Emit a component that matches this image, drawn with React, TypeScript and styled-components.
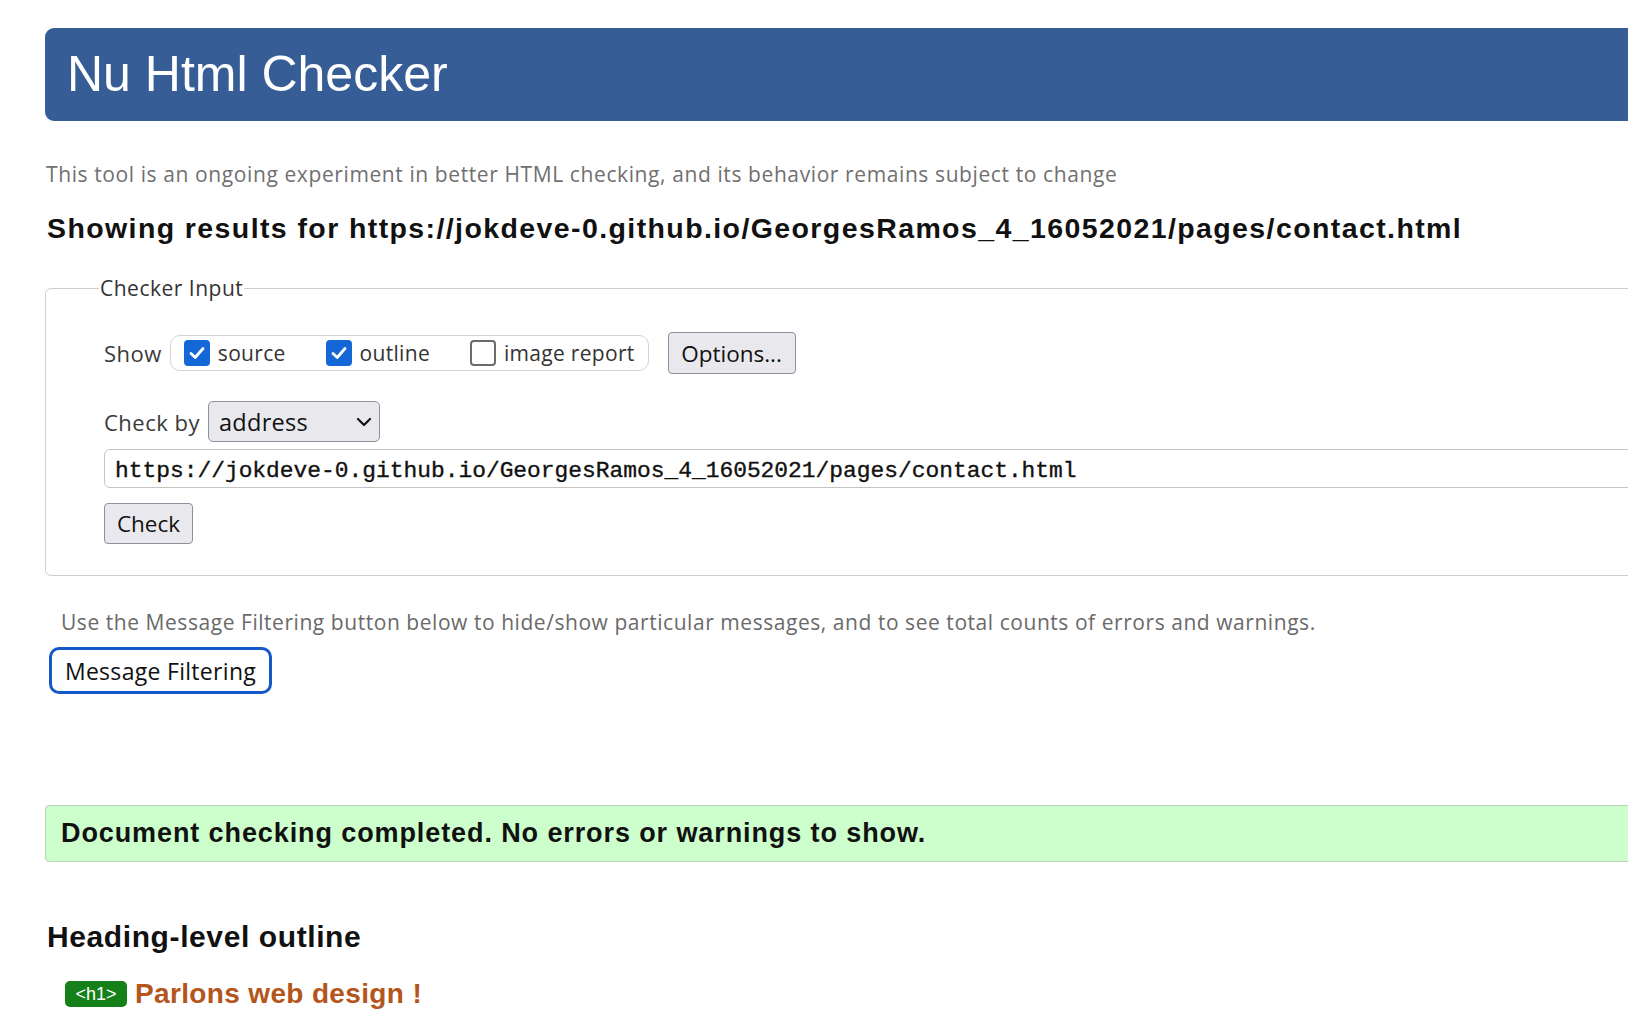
import React from "react";
import styled, { createGlobalStyle } from "styled-components";

const GlobalStyle = createGlobalStyle`
  html, body {
    margin: 0;
    padding: 0;
    background: #ffffff;
    overflow: hidden;
  }
  body {
    font-family: "Open Sans", "Noto Sans", sans-serif;
    color: #222;
  }
`;

const Page = styled.main`
  width: 1700px;
  padding: 28px 0 0 45px;
  box-sizing: border-box;
`;

const Banner = styled.h1`
  margin: 0;
  height: 93px;
  box-sizing: border-box;
  padding-left: 22px;
  background: #365d95;
  border-radius: 9px;
  color: #ffffff;
  font-family: "Liberation Sans", Arial, sans-serif;
  font-weight: 400;
  font-size: 50px;
  line-height: 93px;
`;

const Tagline = styled.p`
  margin: 41px 0 0 1px;
  font-size: 21px;
  letter-spacing: 0.6px;
  line-height: 24px;
  color: #707070;
`;

const ResultsFor = styled.h2`
  margin: 26px 0 0 2px;
  font-family: "Liberation Sans", Arial, sans-serif;
  font-weight: 700;
  font-size: 28.5px;
  letter-spacing: 1.4px;
  line-height: 32px;
  color: #111;
`;

const Fieldset = styled.fieldset`
  margin: 32px 0 0 0;
  padding: 0 0 31px 58px;
  border: 1px solid #cfcfcf;
  border-radius: 6px;
  min-width: 0;
`;

const Legend = styled.legend`
  margin-left: -5px;
  padding: 0 1px;
  font-size: 21px;
  letter-spacing: 0.5px;
  line-height: 24px;
  color: #333;
`;

const Row = styled.div<{ $top: number }>`
  display: flex;
  align-items: center;
  margin-top: ${(p) => p.$top}px;
`;

const Label = styled.span`
  font-size: 22px;
  letter-spacing: 0.5px;
  color: #3a3a3a;
  margin-right: 8px;
`;

const Group = styled.div`
  display: flex;
  align-items: center;
  height: 36px;
  box-sizing: border-box;
  padding: 0 13px;
  border: 1px solid #d2d2d2;
  border-radius: 10px;
`;

const Option = styled.label`
  display: flex;
  align-items: center;
  gap: 8px;
  margin-right: 40px;
  font-size: 21px;
  letter-spacing: 0.3px;
  color: #333;
  &:last-child {
    margin-right: 0;
  }
`;

const Box = styled.span<{ $checked: boolean }>`
  display: inline-flex;
  align-items: center;
  justify-content: center;
  width: 26px;
  height: 26px;
  box-sizing: border-box;
  border-radius: 4px;
  background: ${(p) => (p.$checked ? "#1467d6" : "#ffffff")};
  border: ${(p) => (p.$checked ? "none" : "2px solid #6b6b6b")};
`;

const NativeButton = styled.button<{ $w: number; $h: number }>`
  width: ${(p) => p.$w}px;
  height: ${(p) => p.$h}px;
  box-sizing: border-box;
  background: #e9e9ed;
  border: 1px solid #8f8f9d;
  border-radius: 4px;
  font-family: "Open Sans", "Noto Sans", sans-serif;
  font-size: 22.5px;
  color: #111;
  padding: 0;
`;

const OptionsButton = styled(NativeButton)`
  margin-left: 19px;
`;

const Select = styled.div`
  display: flex;
  align-items: center;
  justify-content: space-between;
  width: 172px;
  height: 41px;
  box-sizing: border-box;
  padding: 0 7px 0 10px;
  background: #e9e9ed;
  border: 1px solid #8f8f9d;
  border-radius: 5px;
  font-size: 23.5px;
  letter-spacing: 0.3px;
  color: #111;
`;

const UrlInput = styled.input`
  display: block;
  width: 100%;
  height: 39px;
  margin-top: 7px;
  box-sizing: border-box;
  padding: 6px 10px 1px;
  border: 1px solid #c4c4c4;
  border-radius: 6px;
  background: #fff;
  font-family: "Liberation Mono", "DejaVu Sans Mono", monospace;
  font-weight: 400;
  font-size: 22.9px;
  line-height: normal;
  color: #111;
  -webkit-text-stroke: 0.35px #111;
  outline: none;
`;

const CheckButton = styled(NativeButton)`
  display: block;
  margin-top: 15px;
`;

const Hint = styled.p`
  margin: 34px 0 0 16px;
  font-size: 21px;
  letter-spacing: 0.55px;
  line-height: 24px;
  color: #6a6a6a;
`;

const FilterButton = styled.button`
  display: block;
  margin: 13px 0 0 4px;
  width: 223px;
  height: 47px;
  box-sizing: border-box;
  background: #fff;
  border: 3px solid #1458c9;
  border-radius: 10px;
  font-family: "Open Sans", "Noto Sans", sans-serif;
  font-size: 23px;
  letter-spacing: 0.3px;
  color: #111;
  padding: 0;
`;

const Success = styled.div`
  margin-top: 111px;
  height: 57px;
  box-sizing: border-box;
  display: flex;
  align-items: center;
  padding-left: 15px;
  background: #ccffcc;
  border: 1px solid #b9d3b9;
  border-radius: 4px;
  font-family: "Liberation Sans", Arial, sans-serif;
  font-weight: 700;
  font-size: 27px;
  letter-spacing: 0.9px;
  color: #111;
`;

const OutlineTitle = styled.h2`
  margin: 57px 0 0 2px;
  font-family: "Liberation Sans", Arial, sans-serif;
  font-weight: 700;
  font-size: 30px;
  letter-spacing: 0.6px;
  line-height: 36px;
  color: #111;
`;

const OutlineItem = styled.div`
  display: flex;
  align-items: center;
  gap: 8px;
  margin: 24px 0 0 20px;
  height: 30px;
`;

const Tag = styled.span`
  display: inline-flex;
  align-items: center;
  justify-content: center;
  width: 62px;
  height: 26px;
  border-radius: 5px;
  background: #15801a;
  color: #fff;
  font-family: "Liberation Sans", Arial, sans-serif;
  font-size: 18px;
`;

const HeadingText = styled.span`
  font-family: "Liberation Sans", Arial, sans-serif;
  font-weight: 700;
  font-size: 28px;
  letter-spacing: 0.35px;
  color: #b4561c;
`;

const Tick = () => (
  <svg width="18" height="18" viewBox="0 0 18 18" aria-hidden>
    <path d="M3 9.5 L7.2 13.5 L15 4.5" fill="none" stroke="#fff" strokeWidth="2.8" strokeLinecap="round" strokeLinejoin="round" />
  </svg>
);

const Chevron = () => (
  <svg width="16" height="12" viewBox="0 0 16 12" aria-hidden>
    <path d="M2 3 L8 9 L14 3" fill="none" stroke="#111" strokeWidth="2.2" strokeLinecap="round" strokeLinejoin="round" />
  </svg>
);

const url = "https://jokdeve-0.github.io/GeorgesRamos_4_16052021/pages/contact.html";

const options: { label: string; checked: boolean }[] = [
  { label: "source", checked: true },
  { label: "outline", checked: true },
  { label: "image report", checked: false },
];

export default function App() {
  return (
    <>
      <GlobalStyle />
      <Page>
        <Banner>Nu Html Checker</Banner>
        <Tagline>
          This tool is an ongoing experiment in better HTML checking, and its behavior remains subject to change
        </Tagline>
        <ResultsFor>Showing results for {url}</ResultsFor>
        <Fieldset>
          <Legend>Checker Input</Legend>
          <Row $top={32}>
            <Label>Show</Label>
            <Group>
              {options.map((o) => (
                <Option key={o.label}>
                  <Box $checked={o.checked}>{o.checked && <Tick />}</Box>
                  {o.label}
                </Option>
              ))}
            </Group>
            <OptionsButton $w={128} $h={42}>Options...</OptionsButton>
          </Row>
          <Row $top={27}>
            <Label>Check by</Label>
            <Select>
              <span>address</span>
              <Chevron />
            </Select>
          </Row>
          <UrlInput readOnly value={url} />
          <CheckButton $w={89} $h={41}>Check</CheckButton>
        </Fieldset>
        <Hint>
          Use the Message Filtering button below to hide/show particular messages, and to see total counts of errors and warnings.
        </Hint>
        <FilterButton>Message Filtering</FilterButton>
        <Success>Document checking completed. No errors or warnings to show.</Success>
        <OutlineTitle>Heading-level outline</OutlineTitle>
        <OutlineItem>
          <Tag>&lt;h1&gt;</Tag>
          <HeadingText>Parlons web design !</HeadingText>
        </OutlineItem>
      </Page>
    </>
  );
}
